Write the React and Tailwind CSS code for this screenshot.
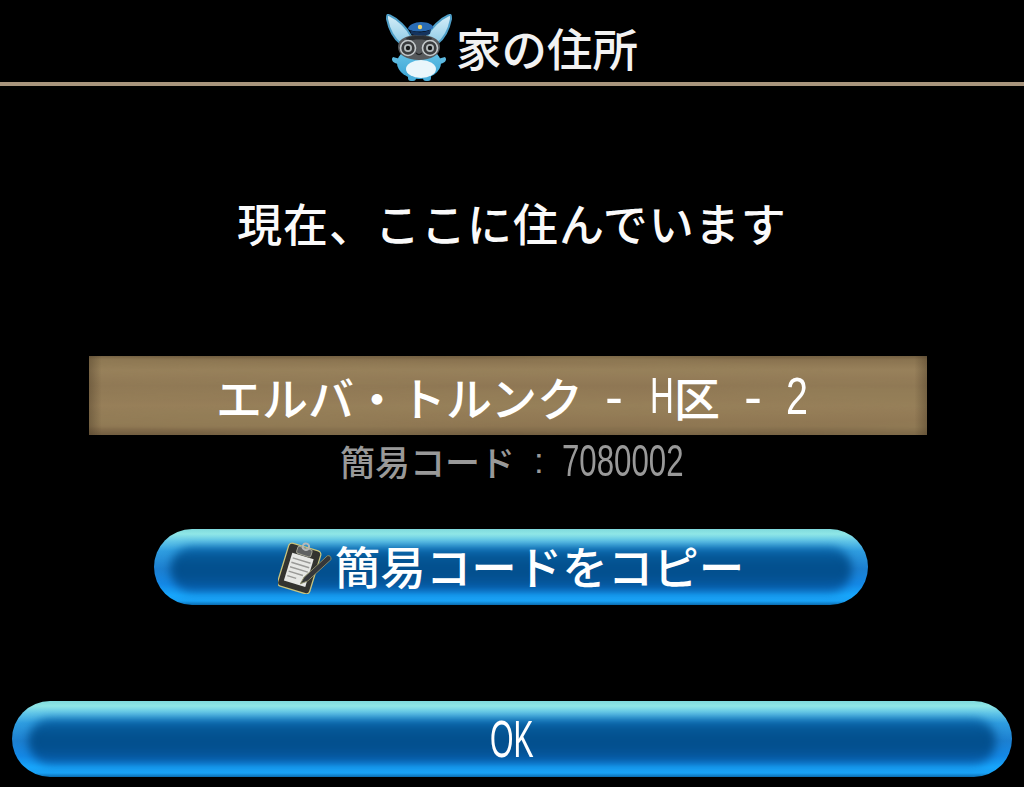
const cjk = "font-['Noto_Sans_CJK_JP',sans-serif]";
const latin = "font-['Liberation_Sans','Noto_Sans_CJK_JP',sans-serif]";

function Mascot() {
  return (
    <svg width="66" height="68" viewBox="0 0 66 68" className="shrink-0" aria-hidden="true">
      <defs>
        <linearGradient id="ear" x1="0" y1="0" x2="0" y2="1">
          <stop offset="0" stopColor="#d6eef8" />
          <stop offset="1" stopColor="#8ecbe6" />
        </linearGradient>
        <linearGradient id="body" x1="0" y1="0" x2="0" y2="1">
          <stop offset="0" stopColor="#6cc7ea" />
          <stop offset="1" stopColor="#3aa4d4" />
        </linearGradient>
      </defs>
      <path d="M3 1 C1 0 1 2 1 5 C3 15 7 24 15 30 L25 22 C21 14 12 5 3 1Z" fill="url(#ear)" stroke="#4f9fc8" strokeWidth="2" />
      <path d="M63 1 C65 0 65 2 65 5 C63 15 59 24 51 30 L41 22 C45 14 54 5 63 1Z" fill="url(#ear)" stroke="#4f9fc8" strokeWidth="2" />
      <path d="M7 43 C4 46 8 50 13 50 L18 46Z" fill="#5cb9e0" />
      <path d="M59 43 C62 46 58 50 53 50 L48 46Z" fill="#5cb9e0" />
      <ellipse cx="33" cy="49" rx="22" ry="16" fill="url(#body)" />
      <rect x="22" y="60" width="8" height="7" rx="3" fill="#4aaeda" />
      <rect x="37" y="60" width="8" height="7" rx="3" fill="#4aaeda" />
      <ellipse cx="35" cy="55" rx="15" ry="9" fill="#eaf6fb" />
      <path d="M12 33 C12 24 22 21 33 21 C44 21 54 24 54 33 C54 41 45 46 33 46 C21 46 12 41 12 33Z" fill="#56595c" />
      <path d="M20 24 C26 21 40 21 46 24 L44 27 C38 25 28 25 22 27Z" fill="#2b2e31" />
      <circle cx="22" cy="34" r="7.5" fill="#3a3c3e" stroke="#c4c9cb" strokeWidth="1.6" />
      <circle cx="44" cy="34" r="7.5" fill="#3a3c3e" stroke="#c4c9cb" strokeWidth="1.6" />
      <circle cx="22" cy="34" r="4" fill="#b4babc" />
      <circle cx="44" cy="34" r="4" fill="#b4babc" />
      <circle cx="22" cy="34" r="2.2" fill="#17191a" />
      <circle cx="44" cy="34" r="2.2" fill="#17191a" />
      <path d="M30 39 Q33 42 36 39" fill="none" stroke="#202224" strokeWidth="1.2" />
      <path d="M22 15 C22 11 29 8 35 8 C42 8 48 11 47 14 C43 18 28 19 22 15Z" fill="#2a6cb4" />
      <path d="M24 16 C30 19 40 19 45 15 L44 20 C39 22 30 22 25 20Z" fill="#15345e" />
      <circle cx="34" cy="13" r="2.2" fill="#f2d667" />
    </svg>
  );
}

function Clipboard() {
  return (
    <svg width="54" height="54" viewBox="0 0 58 58" className="shrink-0" aria-hidden="true">
      <g transform="rotate(17 24 30)">
        <rect x="5" y="7" width="36" height="48" rx="4" fill="#33332f" stroke="#c9c47e" strokeWidth="1.4" />
        <rect x="11" y="17" width="24" height="31" fill="#e6e7e4" />
        <path d="M13 22H33M13 27H33M13 32H33M13 37H29M13 42H23" stroke="#9a9a97" strokeWidth="1.5" />
        <rect x="15" y="8" width="16" height="8" rx="2" fill="#5f6162" stroke="#a9a998" strokeWidth="1" />
        <circle cx="23" cy="6.5" r="3.4" fill="none" stroke="#b6b8b8" strokeWidth="2" />
      </g>
      <path d="M53 17 L28 40 L24 47 L32 44 L57 21 Q57 16 53 17Z" fill="#35373a" stroke="#8f8f68" strokeWidth="1" strokeLinejoin="round" />
    </svg>
  );
}

function GlossButton({ className = "", children }) {
  return (
    <div
      className={`relative flex h-[76px] items-center justify-center overflow-hidden rounded-[38px] bg-[linear-gradient(180deg,#7fdadd_0px,#8fe6e6_5px,#62c6e8_12px,#2f9de0_22px,#1c7fd0_40px,#1488e6_55px,#18a6fc_66px,#1aa2f6_72px,#0a6cb0_76px)] ${className}`}
    >
      <div className="absolute inset-x-[16px] top-[18px] bottom-[13px] rounded-[24px] bg-[linear-gradient(180deg,#0a66aa_0%,#03508e_35%,#034f8e_65%,#0860b0_100%)] blur-[5px]" />
      <div className="relative flex items-center">{children}</div>
    </div>
  );
}

function Squeezed({ width, children, className = "" }) {
  return (
    <span className={`inline-block whitespace-nowrap ${className}`} style={{ width }}>
      {children}
    </span>
  );
}

function WoodGrain() {
  return (
    <svg className="absolute inset-0 h-full w-full opacity-45" aria-hidden="true">
      <filter id="grainDark">
        <feTurbulence type="fractalNoise" baseFrequency="0.003 0.07" numOctaves="2" seed="21" />
        <feGaussianBlur stdDeviation="3 1" />
        <feColorMatrix values="0 0 0 0 0.3  0 0 0 0 0.22  0 0 0 0 0.1  3 0 0 0 -1.1" />
      </filter>
      <rect width="100%" height="100%" filter="url(#grainDark)" />
    </svg>
  );
}

export default function App() {
  return (
    <div className={`flex h-[787px] w-[1024px] flex-col overflow-hidden bg-black text-white ${cjk}`}>
      <header className="flex h-[82px] items-end justify-center">
        <div className="flex items-end">
          <Mascot />
          <h1 className="mb-[5px] ml-[4px] text-[45.5px] leading-[60px] font-medium text-[#f2f2f2]">家の住所</h1>
        </div>
      </header>
      <div className="h-[4px] bg-[#a8957d]" />

      <p className="mt-[107px] text-center text-[45px] leading-[60px] font-medium tracking-[1px] whitespace-nowrap text-[#fafafa]">
        現在、ここに住んでいます
      </p>

      <div className="relative mt-[103px] ml-[89px] flex h-[79px] w-[838px] items-center justify-center overflow-hidden bg-[linear-gradient(180deg,#6d5a3e_0px,#8a7350_4px,#98815b_14px,#8f7754_30px,#977f59_50px,#8e7652_70px,#715d40_79px)]">
        <WoodGrain />
        <div className="absolute inset-0 bg-[linear-gradient(90deg,rgba(70,55,35,0.4)_0%,rgba(0,0,0,0)_1.5%,rgba(0,0,0,0)_98.5%,rgba(70,55,35,0.4)_100%)]" />
        <div className="relative ml-[7px] flex items-center text-[46px] leading-[60px] font-medium whitespace-nowrap text-white">
          <span>エルバ・トルンク</span>
          <Squeezed width="18px" className={`ml-[22px] text-[54px] ${latin}`}>
            <span className="inline-block origin-left">-</span>
          </Squeezed>
          <Squeezed width="24px" className={`ml-[27px] text-[50px] ${latin}`}>
            <span className="inline-block origin-left scale-x-[0.66]">H</span>
          </Squeezed>
          <span>区</span>
          <Squeezed width="18px" className={`ml-[24px] text-[54px] ${latin}`}>
            <span className="inline-block origin-left">-</span>
          </Squeezed>
          <Squeezed width="21px" className={`ml-[24px] text-[52px] ${latin}`}>
            <span className="inline-block origin-left scale-x-[0.76]">2</span>
          </Squeezed>
        </div>
      </div>

      <div className="mt-[2px] flex h-[48px] items-center justify-center text-[35px] leading-[48px] font-medium whitespace-nowrap text-[#999999]">
        <span>簡易コード</span>
        <span className={`ml-[19px] w-[10px] ${latin}`}>:</span>
        <Squeezed width="119px" className={`mr-[3px] ml-[18px] text-[44px] ${latin}`}>
          <span className="inline-block origin-left scale-x-[0.71]">7080002</span>
        </Squeezed>
      </div>

      <GlossButton className="mt-[44px] ml-[154px] w-[714px]">
        <div className="flex items-center">
          <Clipboard />
          <span className="mb-[5px] ml-[3px] text-[45.5px] leading-[60px] font-medium whitespace-nowrap text-white">簡易コードをコピー</span>
        </div>
      </GlossButton>

      <GlossButton className="mt-[96px] ml-[12px] w-[1000px]">
        <Squeezed width="45px" className={`text-[52px] leading-[60px] font-medium text-white ${latin}`}>
          <span className="inline-block origin-left scale-x-[0.58]">OK</span>
        </Squeezed>
      </GlossButton>
    </div>
  );
}
